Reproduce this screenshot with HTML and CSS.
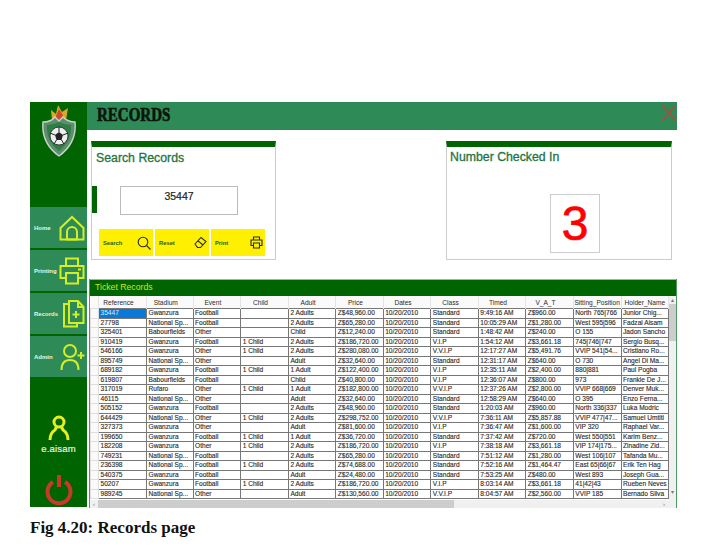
FILE: index.html
```html
<!DOCTYPE html>
<html lang="en">
<head>
  <meta charset="UTF-8" />
  <title>Records</title>
  <link rel="stylesheet" href="styles.css">
</head>
<body>
  <div class="window">
    <div class="sidebar">
      <div class="logo">
        <svg width="36" height="52" viewBox="0 0 36 52">
          <path d="M11 15 L10 5 L15 9 L17 0 L21 7 L27 3 L25 15 L22 20 H14 Z" fill="#dba92a"/>
          <path d="M15 11 L18 4 L22 10 L20 16 H16 Z" fill="#cf4a2a"/>
          <path d="M2 17 Q10 17 14 12 L18 16 L22 12 Q27 17 34 17 Q36 38 18 51 Q0 38 2 17 Z" fill="#5e8f6c" stroke="#c9d3cc" stroke-width="1.4"/>
          <path d="M6 20 Q12 20 18 17 Q24 20 30 20 Q31 36 18 46 Q5 36 6 20 Z" fill="#2e7f46"/>
          <circle cx="18" cy="31" r="9" fill="#eeeeee" stroke="#222" stroke-width="0.8"/>
          <path d="M18 27 L22 30 L20.5 35 H15.5 L14 30 Z" fill="#222"/>
          <path d="M18 22 V27 M22 30 L27 28 M20.5 35 L23 39 M15.5 35 L13 39 M14 30 L9 28" stroke="#222" stroke-width="1"/>
        </svg>
      </div>
      <nav class="nav">
        <a class="nav-item"><span>Home</span>
          <svg width="26" height="26" viewBox="0 0 26 26" class="nav-icon">
            <path d="M1.5 13 L13 2 L24.5 13 V24.5 H1.5 Z"/>
            <path d="M8 24.5 V17 A5 5 0 0 1 18 17 V24.5 Z"/>
          </svg>
        </a>
        <a class="nav-item"><span>Printing</span>
          <svg width="26" height="28" viewBox="0 0 26 28" class="nav-icon">
            <path d="M7 9 V1.5 H19 V9"/>
            <path d="M7 21 H1.5 V9 H24.5 V21 H19"/>
            <path d="M7 16 H19 V26.5 H7 Z"/>
            <path d="M19 12.5 H22"/>
          </svg>
        </a>
        <a class="nav-item"><span>Records</span>
          <svg width="22" height="28" viewBox="0 0 22 28" class="nav-icon">
            <path d="M6 4 H1 V26.5 H14 V23"/>
            <path d="M6 1 H15 L20.5 7 V23 H6 Z"/>
            <path d="M15 1 V7 H20.5"/>
            <path d="M13 11 V18 M9.5 14.5 H16.5"/>
          </svg>
        </a>
        <a class="nav-item"><span>Admin</span>
          <svg width="25" height="28" viewBox="0 0 25 28" class="nav-icon">
            <circle cx="10" cy="8" r="6"/>
            <path d="M1.5 27 Q1.5 17 10 17 Q18.5 17 18.5 27"/>
            <path d="M21 9 V16 M17.5 12.5 H24.5"/>
          </svg>
        </a>
      </nav>
      <div class="user">
        <svg width="22" height="26" viewBox="0 0 22 26" class="user-icon">
          <circle cx="11" cy="7" r="5"/>
          <path d="M8.5 12 L7 15 Q2 18 2 25 M13.5 12 L15 15 Q20 18 20 25"/>
        </svg>
        <div class="user-name">e.aisam</div>
        <svg width="28" height="32" viewBox="0 0 28 32" class="power">
          <path d="M8 8 A11.5 11.5 0 1 0 20 8" class="power-ring"/>
          <path d="M14 1 V13" class="power-bar"/>
        </svg>
      </div>
    </div>

    <div class="main">
      <div class="topbar">
        <h1>RECORDS</h1>
        <svg width="16" height="18" viewBox="0 0 16 18" class="close">
          <path d="M1 1 L15 17 M15 1 L1 17"/>
        </svg>
      </div>

      <div class="panels">
        <section class="panel search-panel">
          <h2>Search Records</h2>
          <div class="search-row">
            <div class="accent"></div>
            <div class="search-input">35447</div>
          </div>
          <div class="buttons">
            <button class="btn">Search
              <svg width="14" height="14" viewBox="0 0 14 14"><circle cx="6" cy="6" r="4.8"/><path d="M9.5 9.5 L13.5 13.5"/></svg>
            </button>
            <button class="btn">Reset
              <svg width="13" height="13" viewBox="0 0 13 13"><path d="M1 8 L7 1.5 L12 5.5 L6.5 11.5 H3.5 Z M4 4.8 L9 9"/></svg>
            </button>
            <button class="btn">Print
              <svg width="13" height="13" viewBox="0 0 13 13"><path d="M3.5 4 V1 H9.5 V4 M3.5 9.5 H1 V4 H12 V9.5 H9.5 M3.5 7 H9.5 V12 H3.5 Z"/></svg>
            </button>
          </div>
        </section>

        <section class="panel count-panel">
          <h2>Number Checked In</h2>
          <div class="count-box">3</div>
        </section>
      </div>

      <section class="records">
        <div class="records-title">Ticket Records</div>
        <div class="grid-wrap">
          <table class="grid">
            <colgroup>
              <col class="c-sel"><col class="c-ref"><col class="c-std"><col class="c-w48"><col class="c-w48"><col class="c-w47"><col class="c-w47"><col class="c-w48"><col class="c-w47"><col class="c-w47"><col class="c-w48"><col class="c-w48"><col class="c-w48">
            </colgroup>
            <thead>
              <tr><th></th><th>Reference</th><th>Stadium</th><th>Event</th><th>Child</th><th>Adult</th><th>Price</th><th>Dates</th><th>Class</th><th>Timed</th><th>V_A_T</th><th class="th-wide">Sitting_Position</th><th class="th-wide">Holder_Name</th></tr>
            </thead>
            <tbody>
              <tr><td></td><td class="selected">35447</td><td>Gwanzura</td><td>Football</td><td></td><td>2 Adults</td><td>Z$48,960.00</td><td>10/20/2010</td><td>Standard</td><td>9:49:16 AM</td><td>Z$960.00</td><td>North 765|766</td><td>Junior Chig...</td></tr>
              <tr><td></td><td>27798</td><td>National Sp...</td><td>Football</td><td></td><td>2 Adults</td><td>Z$65,280.00</td><td>10/20/2010</td><td>Standard</td><td>10:05:29 AM</td><td>Z$1,280.00</td><td>West 595|596</td><td>Fadzai Aisam</td></tr>
              <tr><td></td><td>325401</td><td>Babourfields</td><td>Other</td><td></td><td>Child</td><td>Z$12,240.00</td><td>10/20/2010</td><td>Standard</td><td>1:48:42 AM</td><td>Z$240.00</td><td>O 155</td><td>Jadon Sancho</td></tr>
              <tr><td></td><td>910419</td><td>Gwanzura</td><td>Football</td><td>1 Child</td><td>2 Adults</td><td>Z$186,720.00</td><td>10/20/2010</td><td>V.I.P</td><td>1:54:12 AM</td><td>Z$3,661.18</td><td>745|746|747</td><td>Sergio Busq...</td></tr>
              <tr><td></td><td>546166</td><td>Gwanzura</td><td>Other</td><td>1 Child</td><td>2 Adults</td><td>Z$280,080.00</td><td>10/20/2010</td><td>V.V.I.P</td><td>12:17:27 AM</td><td>Z$5,491.76</td><td>VVIP 541|54...</td><td>Cristiano Ro...</td></tr>
              <tr><td></td><td>895749</td><td>National Sp...</td><td>Other</td><td></td><td>Adult</td><td>Z$32,640.00</td><td>10/20/2010</td><td>Standard</td><td>12:31:17 AM</td><td>Z$640.00</td><td>O 730</td><td>Angel Di Ma...</td></tr>
              <tr><td></td><td>689182</td><td>Gwanzura</td><td>Football</td><td>1 Child</td><td>1 Adult</td><td>Z$122,400.00</td><td>10/20/2010</td><td>V.I.P</td><td>12:35:11 AM</td><td>Z$2,400.00</td><td>880|881</td><td>Paul Pogba</td></tr>
              <tr><td></td><td>619807</td><td>Babourfields</td><td>Football</td><td></td><td>Child</td><td>Z$40,800.00</td><td>10/20/2010</td><td>V.I.P</td><td>12:36:07 AM</td><td>Z$800.00</td><td>973</td><td>Frankie De J...</td></tr>
              <tr><td></td><td>317019</td><td>Rufaro</td><td>Other</td><td>1 Child</td><td>1 Adult</td><td>Z$182,800.00</td><td>10/20/2010</td><td>V.V.I.P</td><td>12:37:26 AM</td><td>Z$2,800.00</td><td>VVIP 668|669</td><td>Denver Muk...</td></tr>
              <tr><td></td><td>46115</td><td>National Sp...</td><td>Other</td><td></td><td>Adult</td><td>Z$32,640.00</td><td>10/20/2010</td><td>Standard</td><td>12:58:29 AM</td><td>Z$640.00</td><td>O 395</td><td>Enzo Ferna...</td></tr>
              <tr><td></td><td>505152</td><td>Gwanzura</td><td>Football</td><td></td><td>2 Adults</td><td>Z$48,960.00</td><td>10/20/2010</td><td>Standard</td><td>1:20:03 AM</td><td>Z$960.00</td><td>North 336|337</td><td>Luka Modric</td></tr>
              <tr><td></td><td>644429</td><td>National Sp...</td><td>Other</td><td>1 Child</td><td>2 Adults</td><td>Z$298,752.00</td><td>10/20/2010</td><td>V.V.I.P</td><td>7:36:11 AM</td><td>Z$5,857.88</td><td>VVIP 477|47...</td><td>Samuel Umtiti</td></tr>
              <tr><td></td><td>327373</td><td>Gwanzura</td><td>Other</td><td></td><td>Adult</td><td>Z$81,600.00</td><td>10/20/2010</td><td>V.I.P</td><td>7:36:47 AM</td><td>Z$1,600.00</td><td>VIP 320</td><td>Raphael Var...</td></tr>
              <tr><td></td><td>199650</td><td>Gwanzura</td><td>Football</td><td>1 Child</td><td>1 Adult</td><td>Z$36,720.00</td><td>10/20/2010</td><td>Standard</td><td>7:37:42 AM</td><td>Z$720.00</td><td>West 550|551</td><td>Karim Benz...</td></tr>
              <tr><td></td><td>182208</td><td>Gwanzura</td><td>Other</td><td>1 Child</td><td>2 Adults</td><td>Z$186,720.00</td><td>10/20/2010</td><td>V.I.P</td><td>7:38:18 AM</td><td>Z$3,661.18</td><td>VIP 174|175...</td><td>Zinadine Zid...</td></tr>
              <tr><td></td><td>749231</td><td>National Sp...</td><td>Football</td><td></td><td>2 Adults</td><td>Z$65,280.00</td><td>10/20/2010</td><td>Standard</td><td>7:51:12 AM</td><td>Z$1,280.00</td><td>West 106|107</td><td>Tafanda Mu...</td></tr>
              <tr><td></td><td>236398</td><td>National Sp...</td><td>Football</td><td>1 Child</td><td>2 Adults</td><td>Z$74,688.00</td><td>10/20/2010</td><td>Standard</td><td>7:52:16 AM</td><td>Z$1,464.47</td><td>East 65|66|67</td><td>Erik Ten Hag</td></tr>
              <tr><td></td><td>540375</td><td>Gwanzura</td><td>Football</td><td></td><td>Adult</td><td>Z$24,480.00</td><td>10/20/2010</td><td>Standard</td><td>7:53:25 AM</td><td>Z$480.00</td><td>West 893</td><td>Joseph Gua...</td></tr>
              <tr><td></td><td>50207</td><td>Gwanzura</td><td>Football</td><td>1 Child</td><td>2 Adults</td><td>Z$186,720.00</td><td>10/20/2010</td><td>V.I.P</td><td>8:03:14 AM</td><td>Z$3,661.18</td><td>41|42|43</td><td>Rueben Neves</td></tr>
              <tr><td></td><td>989245</td><td>National Sp...</td><td>Other</td><td></td><td>Adult</td><td>Z$130,560.00</td><td>10/20/2010</td><td>V.V.I.P</td><td>8:04:57 AM</td><td>Z$2,560.00</td><td>VVIP 185</td><td>Bernado Silva</td></tr>
            </tbody>
          </table>
          <div class="vscroll">
            <span class="arrow">&#9652;</span>
            <div class="vthumb"></div>
            <span class="arrow arrow-down">&#9662;</span>
          </div>
        </div>
        <div class="hscroll">
          <span class="arrow">&#8249;</span>
          <div class="hthumb"></div>
          <span class="arrow arrow-right">&#8250;</span>
        </div>
      </section>
    </div>
  </div>

  <p class="caption">Fig 4.20: Records page</p>
</body>
</html>
```

FILE: styles.css
```css
body {
  margin: 0;
  padding: 102px 0 0 30px;
  background-color: #fff;
  font-family: "Liberation Sans", Arial, sans-serif;
}

.window {
  display: flex;
  width: 647px;
  height: 405px;
}

/* left menu */
.sidebar {
  width: 57px;
  flex-shrink: 0;
  display: flex;
  flex-direction: column;
  background-color: #006400;
}

.logo {
  height: 105px;
  display: flex;
  justify-content: center;
  padding-top: 3px;
  box-sizing: border-box;
}

.nav {
  display: flex;
  flex-direction: column;
  gap: 2px;
}

.nav-item {
  height: 41px;
  display: flex;
  align-items: center;
  justify-content: space-between;
  padding: 0 2px 0 4px;
  background-color: #2e8b57;
  color: #e8f5e0;
  font-size: 6px;
  font-weight: bold;
}

.nav-icon {
  fill: none;
  stroke: #d4ee22;
  stroke-width: 2;
}

.user {
  flex: 1;
  display: flex;
  flex-direction: column;
  align-items: center;
  padding-top: 38px;
  overflow: hidden;
}

.user-icon {
  fill: none;
  stroke: #e6f020;
  stroke-width: 3;
}

.user-name {
  margin-top: 2px;
  color: #e8f2e0;
  font-size: 9.5px;
  letter-spacing: 0.2px;
  -webkit-text-stroke: 0.2px #e8f2e0;
}

.power {
  margin-top: 20px;
  fill: none;
}

.power-ring {
  stroke: #c8382c;
  stroke-width: 4;
}

.power-bar {
  stroke: #c8382c;
  stroke-width: 4;
}

/* right side */
.main {
  flex: 1;
  min-width: 0;
}

.topbar {
  position: relative;
  height: 28px;
  padding-left: 10px;
  background-color: #2e8b57;
  box-sizing: border-box;
}

.topbar h1 {
  margin: 0;
  font-family: "Liberation Serif", "Times New Roman", serif;
  font-size: 15px;
  font-weight: bold;
  line-height: 26px;
  color: #0c140c;
  -webkit-text-stroke: 0.5px #0c140c;
  transform: scaleY(1.2);
  transform-origin: 0 50%;
}

.close {
  position: absolute;
  top: 2px;
  right: 0;
  fill: none;
  stroke: #ad4b3c;
  stroke-width: 1.6;
}

.panels {
  display: flex;
  margin: 11px 0 0 4px;
  gap: 170px;
}

.panel {
  height: 119px;
  box-sizing: border-box;
  border: 1px solid #ccc;
  border-top: 6px solid #006400;
}

.panel h2 {
  margin: 0;
  font-size: 12.3px;
  font-weight: normal;
  color: #23753f;
  -webkit-text-stroke: 0.3px #23753f;
}

.search-panel {
  width: 185px;
}

.search-panel h2 {
  padding: 4px 0 0 4px;
}

.search-row {
  display: flex;
  margin: 21px 0 0 0;
}

.accent {
  width: 5px;
  height: 27px;
  background-color: #006400;
}

.search-input {
  width: 118px;
  height: 29px;
  margin-left: 23px;
  box-sizing: border-box;
  border: 1px solid #bbb;
  padding-top: 3px;
  text-align: center;
  font-size: 10.5px;
  color: #222;
  -webkit-text-stroke: 0.2px #222;
}

.buttons {
  display: flex;
  gap: 2px;
  margin: 14px 0 0 7px;
}

.btn {
  width: 54px;
  height: 27px;
  display: flex;
  align-items: center;
  justify-content: space-between;
  padding: 0 2px 0 4px;
  border: none;
  background-color: #ffef00;
  color: #1f5a25;
  font-family: inherit;
  font-size: 5.8px;
  font-weight: bold;
}

.btn svg {
  fill: none;
  stroke: #24302a;
  stroke-width: 1.1;
}

.count-panel {
  width: 226px;
}

.count-panel h2 {
  padding: 3px 0 0 3px;
}

.count-box {
  width: 50px;
  height: 59px;
  margin: 30px 0 0 103px;
  box-sizing: border-box;
  border: 1px solid #ccc;
  color: #f00;
  font-size: 48px;
  line-height: 57px;
  text-align: center;
  -webkit-text-stroke: 0.7px #f00;
}

/* ticket grid */
.records {
  margin: 19px 0 0 2px;
  border-left: 1px solid #4f9a5e;
  border-right: 1px solid #4f9a5e;
}

.records-title {
  height: 17px;
  padding-left: 5px;
  background-color: #006400;
  border-top: 1px solid #7fc98a;
  box-sizing: border-box;
  color: #cbe81e;
  font-size: 8.7px;
  line-height: 15px;
}

.grid-wrap {
  display: flex;
  height: 204px;
  overflow: hidden;
}

.grid {
  width: 577px;
  table-layout: fixed;
  border-collapse: collapse;
  font-size: 6.6px;
  color: #2a2a2a;
  align-self: flex-start;
}

.c-sel { width: 8px; }
.c-ref { width: 48px; }
.c-std { width: 46.5px; }
.c-w48 { width: 47.7px; }
.c-w47 { width: 47.4px; }

.grid th {
  height: 12px;
  padding: 0 8px 0 0;
  border-right: 1px solid #e4e4e4;
  background-color: #fafafa;
  font-weight: normal;
  text-align: center;
  white-space: nowrap;
  overflow: hidden;
}

.grid .th-wide {
  padding: 0;
}

.grid td {
  height: 8.5px;
  padding: 0 0 0 1.5px;
  border: 1px solid #777;
  line-height: 8px;
  white-space: nowrap;
  overflow: hidden;
  -webkit-text-stroke: 0.12px #2a2a2a;
}

.grid td:first-child {
  border-color: #ddd;
  background-color: #fafafa;
}

.grid .selected {
  background-color: #0a78d7;
  color: #dcecf8;
  -webkit-text-stroke: 0;
}

.vscroll {
  width: 9px;
  display: flex;
  flex-direction: column;
  align-items: center;
  background-color: #f0f0f0;
}

.vthumb {
  width: 7px;
  height: 37px;
  background-color: #cdcdcd;
}

.arrow {
  color: #777;
  font-size: 6px;
  line-height: 8px;
}

.arrow-down {
  margin-top: auto;
  margin-bottom: 4px;
}

.hscroll {
  display: flex;
  align-items: center;
  height: 8px;
  background-color: #f0f0f0;
}

.hscroll .arrow {
  width: 8px;
  text-align: center;
}

.hthumb {
  width: 356px;
  height: 8px;
  background-color: #cdcdcd;
}

.hscroll .arrow-right {
  margin-left: auto;
  margin-right: 8px;
  margin-bottom: 0;
}

.caption {
  margin: 11px 0 0;
  font-family: "Liberation Serif", "Times New Roman", serif;
  font-size: 17px;
  font-weight: bold;
  color: #111;
}
```
